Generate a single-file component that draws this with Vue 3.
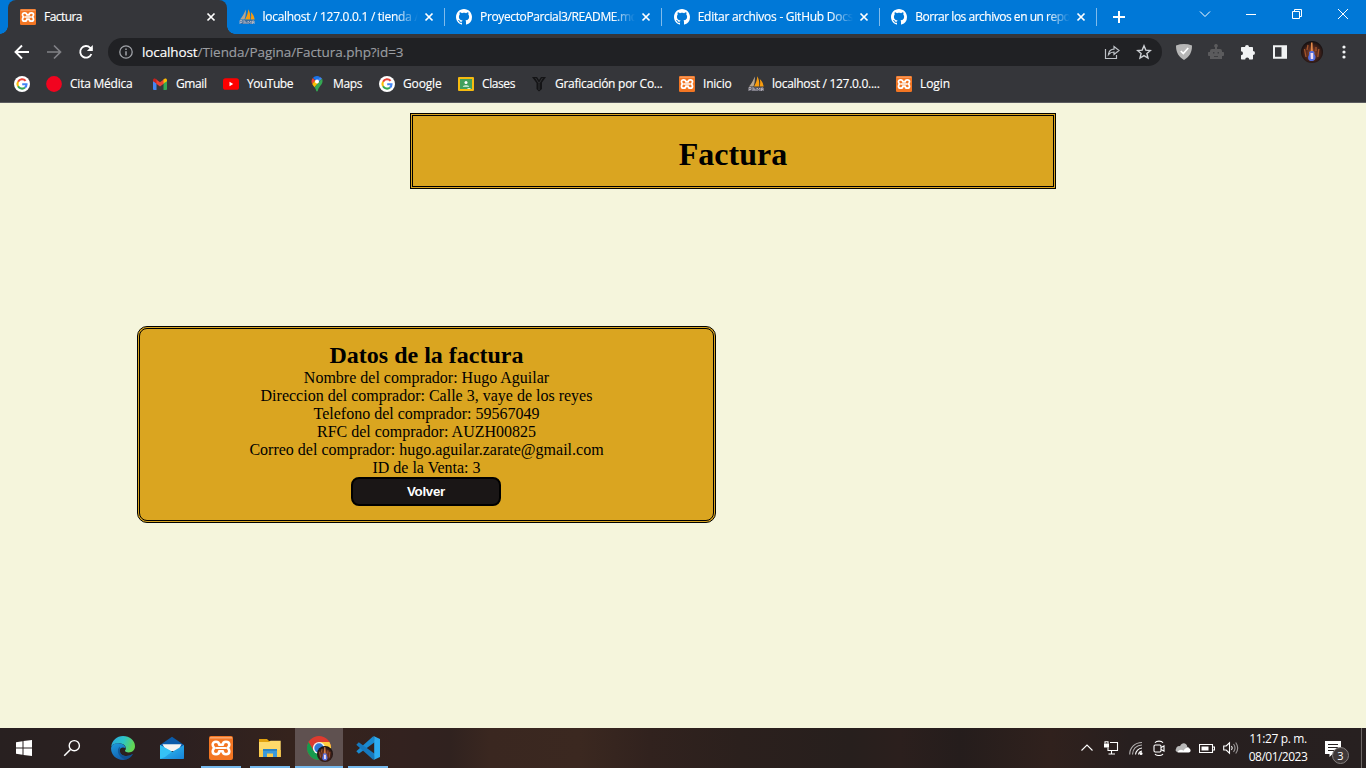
<script setup>
const tabs = [
  { icon: 'pma', title: 'localhost / 127.0.0.1 / tienda /', width: 156 },
  { icon: 'github', title: 'ProyectoParcial3/README.md', width: 157.5 },
  { icon: 'github', title: 'Editar archivos - GitHub Docs', width: 155.5 },
  { icon: 'github', title: 'Borrar los archivos en un repo', width: 155 },
]

const bookmarks = [
  { icon: 'google', title: '', width: 0, slot: 32 },
  { icon: 'dot', title: 'Cita Médica', width: 62.5, slot: 106 },
  { icon: 'gmail', title: 'Gmail', width: 30.5, slot: 71 },
  { icon: 'youtube', title: 'YouTube', width: 46, slot: 86 },
  { icon: 'maps', title: 'Maps', width: 29, slot: 70 },
  { icon: 'google', title: 'Google', width: 38.5, slot: 79 },
  { icon: 'clases', title: 'Clases', width: 33, slot: 73 },
  { icon: 'graf', title: 'Graficación por Co...', width: 107.5, slot: 148 },
  { icon: 'xampp', title: 'Inicio', width: 28.5, slot: 69 },
  { icon: 'pma', title: 'localhost / 127.0.0....', width: 107.5, slot: 148 },
  { icon: 'xampp', title: 'Login', width: 30, slot: 60 },
]

const apps = [
  { icon: 'edge', open: false },
  { icon: 'mail', open: false },
  { icon: 'xampp', open: true },
  { icon: 'folder', open: true },
  { icon: 'chrome', open: true, active: true },
  { icon: 'vscode', open: true },
]

const rows = [
  'Nombre del comprador: Hugo Aguilar',
  'Direccion del comprador: Calle 3, vaye de los reyes',
  'Telefono del comprador: 59567049',
  'RFC del comprador: AUZH00825',
  'Correo del comprador: hugo.aguilar.zarate@gmail.com',
  'ID de la Venta: 3',
]

// Tracks a label so that it spans the given width in pixels.
const vFit = {
  mounted(el, { value }) {
    const count = el.textContent.length
    if (!value || !count) return
    const natural = el.getBoundingClientRect().width
    el.style.letterSpacing = (value - natural) / count + 'px'
  },
}
</script>

<template>
  <div class="screen">
    <svg class="defs" aria-hidden="true">
      <defs>
        <linearGradient id="gEdgeA" x1="0" y1="0" x2="1" y2="0.3">
          <stop offset="0" stop-color="#2aa5e0" /><stop offset=".55" stop-color="#2cc4c8" /><stop offset="1" stop-color="#62d653" />
        </linearGradient>
        <linearGradient id="gEdgeB" x1="0" y1="0" x2="0.6" y2="1">
          <stop offset="0" stop-color="#1e9de0" /><stop offset="1" stop-color="#1159a8" />
        </linearGradient>
        <linearGradient id="gMail" x1="0" y1="0" x2="1" y2="1">
          <stop offset="0" stop-color="#35c4f2" /><stop offset="1" stop-color="#1683d8" />
        </linearGradient>
        <radialGradient id="gPhoto" cx=".5" cy=".55" r=".55">
          <stop offset="0" stop-color="#a3512f" /><stop offset=".45" stop-color="#5b2c20" /><stop offset="1" stop-color="#100e10" />
        </radialGradient>
        <symbol id="i-xampp" viewBox="0 0 24 24">
          <rect width="24" height="24" rx="2" fill="#f37623" />
          <path d="M1 1.800h22" stroke="#f9ab77" stroke-width="1.400" />
          <path d="M10.200 8.800h3.600C13.800 6.500 15 5.800 17 5.800c2.200 0 3.300 1.400 3.300 3 0 1.500-.8 2.500-1.900 3.200 1.100.7 1.900 1.700 1.900 3.200 0 1.600-1.100 3-3.300 3-2 0-3.200-.7-3.200-3h-3.600c0 2.300-1.200 3-3.200 3-2.200 0-3.300-1.400-3.300-3 0-1.500.8-2.500 1.900-3.200-1.100-.7-1.900-1.700-1.900-3.200 0-1.600 1.100-3 3.300-3 2 0 3.200.7 3.200 3z" fill="none" stroke="#fff" stroke-width="2.600" stroke-linejoin="round" />
          <path d="M7.500 12h9" stroke="#fff" stroke-width="2.200" stroke-linecap="round" />
        </symbol>
        <symbol id="i-pma" viewBox="0 0 16 16">
          <path d="M6.800.5C5.500 4 3.500 7.500 1 10.500h4.500C6.800 7 7.100 3.500 6.800.5z" fill="#b6a58f" />
          <path d="M9.300.3C9 4 8 7.500 6 10.500h5.200C11.500 6.500 11 3 9.300.3z" fill="#f89c0e" />
          <path d="M11.800 3c.6 2.500.5 5-.1 7.500h4C15 7 13.800 4.700 11.800 3z" fill="#f89c0e" />
          <path d="M.3 11h15.200l-1.500 4H2z" fill="#667" opacity=".6" />
          <path d="M1 15v-3.500h2v2H1M5 15v-4M5 13h2v2M9 15v-3l1.500 1.500L12 12v3M13.500 15v-3h1.600v3M13.500 13.500h1.600" fill="none" stroke="#c2bdc5" stroke-width=".8" />
        </symbol>
        <symbol id="i-github" viewBox="0 0 16 16">
          <path fill="#fff" d="M8 0C3.580 0 0 3.580 0 8c0 3.540 2.290 6.530 5.470 7.590.4.070.55-.17.55-.38 0-.19-.01-.82-.01-1.490-2.010.37-2.530-.49-2.690-.94-.09-.23-.48-.94-.82-1.130-.28-.15-.68-.52-.01-.53.63-.01 1.080.58 1.230.82.72 1.210 1.870.87 2.330.66.07-.52.28-.87.51-1.070-1.780-.2-3.640-.89-3.640-3.950 0-.87.31-1.590.82-2.150-.08-.2-.36-1.020.08-2.120 0 0 .67-.21 2.200.82.64-.18 1.320-.27 2-.27s1.360.09 2 .27c1.530-1.040 2.200-.82 2.200-.82.44 1.100.16 1.920.08 2.120.51.56.82 1.270.82 2.150 0 3.070-1.870 3.750-3.650 3.950.29.25.54.73.54 1.480 0 1.070-.01 1.930-.01 2.200 0 .21.15.46.55.38A8.010 8.010 0 0 0 16 8c0-4.420-3.580-8-8-8z" />
        </symbol>
        <symbol id="i-google" viewBox="0 0 16 16">
          <circle cx="8" cy="8" r="8" fill="#fff" />
          <g fill="none" stroke-width="2.100">
            <path d="M11.600 4.900A4.600 4.600 0 0 0 4.050 5.700" stroke="#ea4335" />
            <path d="M4.050 5.700a4.700 4.700 0 0 0 0 4.600" stroke="#fbbc05" />
            <path d="M4.050 10.300a4.600 4.600 0 0 0 6.950 1.250" stroke="#34a853" />
            <path d="M11 11.550A4.500 4.500 0 0 0 12.500 8.200H8.200" stroke="#4285f4" />
          </g>
        </symbol>
        <symbol id="i-dot" viewBox="0 0 16 16"><circle cx="8" cy="8" r="7.900" fill="#f1041f" /></symbol>
        <symbol id="i-gmail" viewBox="0 0 16 16">
          <path d="M1 4.500l3.500 2.600V14H2a1 1 0 0 1-1-1z" fill="#4285f4" />
          <path d="M15 4.500l-3.500 2.600V14H14a1 1 0 0 0 1-1z" fill="#34a853" />
          <path d="M4 3.200L8 6.200l4-3v4.300L8 10.500 4 7.500z" fill="#ea4335" />
          <path d="M1 4.200C1 2.600 2.700 2.200 3.700 3l.8.600v4L1 5.200z" fill="#c5221f" />
          <path d="M15 4.200c0-1.600-1.700-2-2.700-1.200l-.8.600v4L15 5.200z" fill="#fbbc04" />
        </symbol>
        <symbol id="i-youtube" viewBox="0 0 16 16">
          <rect y="2.200" width="16" height="11.600" rx="2.600" fill="#f00" /><path d="M6.500 5.800v4.400L10.200 8z" fill="#fff" />
        </symbol>
        <symbol id="i-maps" viewBox="0 0 16 16">
          <path d="M8 0a5.500 5.500 0 0 0-4.200 2L8 5.500 11 .9A5.500 5.500 0 0 0 8 0z" fill="#1a73e8" />
          <path d="M3.800 2A5.500 5.500 0 0 0 3.200 8l3-3.600z" fill="#ea4335" />
          <path d="M11 .9l-5 6 2 1.300 5-5.600A5.500 5.500 0 0 0 11 .9z" fill="#4285f4" />
          <path d="M3.200 8c.6 1.200 1.600 2.300 2.300 3.300L10 6 6.300 4.200z" fill="#fbbc04" />
          <path d="M13 2.600c1 2 .6 4.400-.6 6-1.700 2.300-3 3.500-3.500 6-.2 1.200-1.600 1.200-1.800 0-.3-1.400-.9-2.300-1.600-3.300z" fill="#34a853" />
          <circle cx="8" cy="5.400" r="2" fill="#fff" />
        </symbol>
        <symbol id="i-clases" viewBox="0 0 16 16">
          <rect y="1" width="16" height="14" rx="1" fill="#f6bb10" /><rect x="2" y="3" width="12" height="10" fill="#42a05c" />
          <circle cx="8" cy="6.500" r="1.500" fill="#fff" /><path d="M4.800 11c0-2.700 6.400-2.700 6.400 0z" fill="#b8dfc4" /><path d="M9.500 12.200h3V13h-3z" fill="#fff" />
        </symbol>
        <symbol id="i-graf" viewBox="0 0 16 16">
          <path d="M1 1h5l2 3 2-3h5l-4 5.500V13l-3 2.500L5.500 13V7z" fill="#141416" /><path d="M4.500 2l3.500 5.500L11.500 2M8 8v6" stroke="#3e3f42" stroke-width=".7" fill="none" />
        </symbol>
        <symbol id="i-edge" viewBox="0 0 24 24">
          <path d="M.2 10.500C1.100 4.200 5.800 0 12 0c6.700 0 12 4.500 12 10.200 0 3.500-2.700 6.200-6.300 6.200-2.500 0-4-.9-3.700-1.800.9-1.200 1.100-1.800.8-3C14 9 12 7.500 8.500 7.300 4.800 7.100 1.800 8 .2 10.500z" fill="url(#gEdgeA)" />
          <path d="M.1 12C.4 8.500 4 7 7.800 7.200c4 .2 6.600 2.300 7 5.200-3-1.800-6-.7-6 2.300 0 4.500 6.200 7.300 13.100 3.400C19.800 21.700 16.200 24 12 24 5.200 24-.4 18.500.1 12z" fill="url(#gEdgeB)" />
          <path d="M8.800 10.500c-5 5 1 12.700 6.500 12.900 2.700-.7 5.200-2.600 6.600-5.300-6.900 3.900-13.100 1.100-13.100-3.400z" fill="#104a85" opacity=".7" />
        </symbol>
        <symbol id="i-mail" viewBox="0 0 24 24">
          <path d="M0 9L12 .8 24 9v4H0z" fill="#0b5ba9" /><path d="M2.500 8.300h19L18 15H6z" fill="#f5f4f2" />
          <path d="M0 9l24 14H1a1 1 0 0 1-1-1z" fill="#28b5ef" /><path d="M24 9L0 23h23a1 1 0 0 0 1-1z" fill="url(#gMail)" /><path d="M0 9l12 6.500L5 21 0 23z" fill="#35c2f5" />
        </symbol>
        <symbol id="i-folder" viewBox="0 0 24 24">
          <path d="M1 3h8l2 2h11v5H1z" fill="#e2a20e" /><path d="M1 6h10l1.500-1.200H22.700V21H1z" fill="#ffda6a" />
          <path d="M1 14h21.700v7H1z" fill="#fbcb4b" /><path d="M5 13h14v8h-4v-3.500H9V21H5z" fill="#3b9adb" /><path d="M5 13h14v2H5z" fill="#2883c5" />
        </symbol>
        <symbol id="i-photo" viewBox="0 0 22 22">
          <circle cx="11" cy="11" r="11" fill="url(#gPhoto)" />
          <path d="M10 1.500l1.500.1.400 10-2.200.2z" fill="#e28a49" />
          <path d="M8 11c1.500-1.500 4.500-1.500 5.500.2-.6 1.300.2 2.500.9 3.800.6 3-1 5-3.700 5-3 0-4-2-3.400-4.500.7-1.500 1.200-3 .7-4.500z" fill="#536fe0" />
          <path d="M9.500 12h2.700v6H9.800z" fill="#f1dcef" />
          <path d="M3.500 8l1.500 8M17.800 8l-1 8M7 4L6 9M15 6v4" stroke="#a3552b" stroke-width="1.300" />
        </symbol>
        <symbol id="i-chrome" viewBox="0 0 26 26">
          <circle cx="12" cy="12" r="12" fill="#dd3b2f" />
          <path d="M1.600 6A12 12 0 0 0 12 24l5.200-9H6.800z" fill="#169b4d" />
          <path d="M22.400 6A12 12 0 0 1 12 24l5.200-9L12 6z" fill="#ffcd40" />
          <circle cx="12" cy="12" r="6.100" fill="#f3f3f3" /><circle cx="12" cy="12" r="4.700" fill="#3278d5" />
          <svg x="10" y="10" width="16" height="16"><use href="#i-photo" /></svg>
        </symbol>
        <symbol id="i-vscode" viewBox="0 0 24 24">
          <path d="M17.500 0L.3 15.300l2.500 2.400L19 6z" fill="#1a8ad0" />
          <path d="M2.800 6.300L.3 8.700 17.500 24 19 18z" fill="#1679be" />
          <path d="M17.500 0L24 3v18l-6.500 3c.5-.5.7-1 .7-1.700V1.700c0-.7-.2-1.200-.7-1.700z" fill="#2cacf1" />
        </symbol>
      </defs>
    </svg>

    <header class="browser">
      <div class="strip">
        <div class="tab current">
          <svg class="ico"><use href="#i-xampp" /></svg>
          <div class="title"><span v-fit="38">Factura</span></div>
          <svg class="close" viewBox="0 0 8 8"><path d="M.5.5l7 7M7.500.5l-7 7" /></svg>
        </div>
        <div v-for="tab in tabs" :key="tab.title" class="tab">
          <svg class="ico"><use :href="'#i-' + tab.icon" /></svg>
          <div class="title fade"><span v-fit="tab.width">{{ tab.title }}</span></div>
          <svg class="close" viewBox="0 0 8 8"><path d="M.5.5l7 7M7.500.5l-7 7" /></svg>
        </div>
        <svg class="plus" viewBox="0 0 12 12"><path d="M6 0v12M0 6h12" stroke="#fff" stroke-width="2" /></svg>
        <div class="window">
          <svg viewBox="0 0 12 12"><path d="M1 3.500l5 5 5-5" /></svg>
          <svg viewBox="0 0 12 12"><path d="M1 6.500h10" /></svg>
          <svg viewBox="0 0 12 12"><path d="M1.500 3.500h7v7h-7zM3.500 3.500v-2h7v7h-2" /></svg>
          <svg viewBox="0 0 12 12"><path d="M1 1l10 10M11 1L1 11" /></svg>
        </div>
      </div>

      <div class="toolbar">
        <div class="nav">
          <svg viewBox="0 0 16 16"><path d="M15 8H2M8 1.500L1.500 8 8 14.500" stroke="#fff" stroke-width="1.900" fill="none" /></svg>
          <svg viewBox="0 0 16 16"><path d="M1 8h13M8 1.500L14.500 8 8 14.500" stroke="#818286" stroke-width="1.700" fill="none" /></svg>
          <svg viewBox="0 0 16 16"><path d="M13.400 10a5.800 5.800 0 1 1-1.200-6.200L14 5.500" stroke="#fff" stroke-width="1.900" fill="none" /><path d="M14.800 1v6H8.900z" fill="#fff" /></svg>
        </div>
        <div class="omnibox">
          <svg class="info" viewBox="0 0 14 14"><circle cx="7" cy="7" r="6.200" fill="none" stroke="#a0a3a8" stroke-width="1.300" /><path d="M7 6.200v4.300M7 3.500V5" stroke="#a0a3a8" stroke-width="1.500" /></svg>
          <div class="url"><b v-fit="55.500">localhost</b><span v-fit="206">/Tienda/Pagina/Factura.php?id=3</span></div>
          <svg class="share" viewBox="0 0 16 16"><path d="M1.500 5v9.500h11V11M4.500 10.500C5 7 7 5.300 10 5.200V2.500L15 6.500l-5 4V8C7.500 8 6 8.800 4.500 10.500z" fill="none" stroke="#bdc1c6" stroke-width="1.200" /></svg>
          <svg class="star" viewBox="0 0 16 16"><path d="M8 1.800l1.800 4.300 4.600.4-3.500 3 1.100 4.500L8 11.600 4 14l1.100-4.500-3.500-3 4.600-.4z" fill="none" stroke="#cdd0d4" stroke-width="1.400" /></svg>
        </div>
        <div class="extensions">
          <svg viewBox="0 0 16 16"><path d="M0 1.500Q8-1.400 16 1.500C16 9 13 13 8 16 3 13 0 9 0 1.500z" fill="#b6b6b6" /><path d="M4.800 7l2.500 2.500L12.200 4" stroke="#fff" stroke-width="1.700" fill="none" /></svg>
          <svg viewBox="0 0 16 16"><path d="M8 0a1.800 1.800 0 0 1 1 3.300V5h3a2 2 0 0 1 2 2v1h1.200c.5 0 .8.300.8.800v2.400c0 .5-.3.800-.8.800H14v3H2v-3H.8c-.5 0-.8-.3-.8-.8V8.800C0 8.300.3 8 .8 8H2V7a2 2 0 0 1 2-2h3V3.300A1.800 1.800 0 0 1 8 0z" fill="#5b5b5d" /><path d="M5 8h1.400v1.500H5zM9.600 8H11v1.500H9.600zM6 12h4v1H6z" fill="#3d3e41" /></svg>
          <svg viewBox="0 0 16 16"><path d="M5 3a2 2 0 0 1 4 0h3c.6 0 1 .4 1 1v3a2 2 0 0 1 0 4v3.500c0 .6-.4 1-1 1H9.200a2 2 0 0 0-4 0H2c-.6 0-1-.4-1-1v-3.300a2 2 0 0 0 0-4V4c0-.6.400-1 1-1z" fill="#f1f3f4" /></svg>
          <svg viewBox="0 0 16 16"><path fill-rule="evenodd" d="M1 1.200h14v13.600H1zM3 3.200v9.600h6.500V3.200z" fill="#f1f3f4" /></svg>
          <svg class="avatar"><use href="#i-photo" /></svg>
          <svg viewBox="0 0 16 16"><g fill="#f1f3f4"><circle cx="8" cy="3" r="1.600" /><circle cx="8" cy="8" r="1.600" /><circle cx="8" cy="13" r="1.600" /></g></svg>
        </div>
      </div>

      <nav class="bookmarks">
        <div v-for="(mark, i) in bookmarks" :key="i" class="mark" :style="{ width: mark.slot + 'px' }">
          <svg class="ico"><use :href="'#i-' + mark.icon" /></svg>
          <span v-if="mark.title" v-fit="mark.width">{{ mark.title }}</span>
        </div>
      </nav>
    </header>

    <main class="page">
      <div class="banner"><h1>Factura</h1></div>
      <section class="card">
        <h2>Datos de la factura</h2>
        <p v-for="row in rows" :key="row">{{ row }}</p>
        <button type="button"><span v-fit="38">Volver</span></button>
      </section>
    </main>

    <footer class="taskbar">
      <div class="slot">
        <svg width="16" height="16" viewBox="0 0 16 16"><path d="M0 2.300l6.500-1v6.200H0zM7.500 1.100L16 0v7.500H7.500zM0 8.500h6.500v6.200l-6.500-1zM7.500 8.500H16V16l-8.500-1.100z" fill="#fff" /></svg>
      </div>
      <div class="slot">
        <svg width="18" height="18" viewBox="0 0 18 18"><circle cx="11.300" cy="6.700" r="5.100" fill="none" stroke="#fff" stroke-width="1.400" /><path d="M7.500 10.500L1.200 16.800" stroke="#fff" stroke-width="1.500" /></svg>
      </div>
      <div class="apps">
        <div v-for="app in apps" :key="app.icon" class="slot" :class="{ open: app.open, active: app.active }">
          <svg :class="app.icon"><use :href="'#i-' + app.icon" /></svg>
        </div>
      </div>
      <div class="tray">
        <svg viewBox="0 0 16 16"><path d="M2.500 10.500L8 5l5.500 5.500" /></svg>
        <svg viewBox="0 0 16 16"><path d="M7 2.500h7.500v8H5v-3M8.500 11v3M5.500 14h6.500" /><path d="M1 3.500h5v4H1z" fill="#fff" stroke="none" /><path d="M2 3.500V1.700h3v1.800" /></svg>
        <svg viewBox="0 0 16 16"><path d="M10.500 14.500a4 4 0 0 1 3.500-3.500M7.500 14.500A7 7 0 0 1 14 8" /><path d="M4.500 14.500C4.500 9 8.500 5 14 5M1.700 14.500C1.700 7.500 7 2.500 14 2.500" opacity=".65" /><circle cx="13" cy="13.500" r="1.500" fill="#fff" stroke="none" /></svg>
        <svg viewBox="0 0 16 16"><rect x="3" y="5" width="7" height="7" rx="1.200" /><path d="M10 7.500l3-1.500v5l-3-1.500M4 2.800C5.500.6 10.500.6 12 2.800M4 14c1.500 2 6.500 2 8 0" /></svg>
        <svg viewBox="0 0 16 16"><path d="M1 9c.3-3 3-3.500 4-2.800C7 1.700 12 3 12.300 7c2.500-.2 4.200 4.500.7 5H3.500C1 12 0 10.500 1 9z" fill="#b9b9b9" stroke="none" /><path d="M2.500 12.500c1-3 4-3.500 6-1.700 1.300-2.800 4-3.500 5.200-2.500 3 1 2 4.200 0 4.200z" fill="#fff" stroke="none" /></svg>
        <svg viewBox="0 0 16 16"><path d="M.5 4.500h13v8H.5zM14 7h1.500v3H14" /><path d="M2.500 6.500h7v4h-7z" fill="#fff" stroke="none" /></svg>
        <svg viewBox="0 0 16 16"><path d="M.7 6h2.500L6.500 2.800v10.400L3.200 10H.7z" /><path d="M8.500 6q1.500 2 0 4" /><path d="M10.500 4q3 4 0 8M12.700 2.500q4 5.500 0 11" opacity=".55" /></svg>
      </div>
      <div class="clock"><span v-fit="57.500">11:27 p. m.</span><span v-fit="58.500">08/01/2023</span></div>
      <div class="notice">
        <svg viewBox="0 0 16 16"><path d="M0 0h16v13h-8.500L4.500 16v-3H0z" fill="#fff" /><path d="M3 3.500h10M3 6.500h10M3 9.500h6" stroke="#272121" stroke-width="1" /></svg>
        <span class="badge">3</span>
      </div>
      <div class="peek"></div>
    </footer>
  </div>
</template>

<style>
html, body { margin: 0; overflow: hidden; }
</style>

<style scoped>
.screen { width: 1366px; height: 768px; display: flex; flex-direction: column; overflow: hidden; background: #f5f5dc; font-family: "Open Sans", "Noto Sans", sans-serif; }
.defs { position: absolute; width: 0; height: 0; }
.ico { width: 16px; height: 16px; flex: none; }
.browser { height: 103px; flex: none; box-sizing: border-box; background: #35363a; border-bottom: 1px solid #5b5c5f; color: #fff; font-size: 12px; white-space: nowrap; -webkit-text-stroke: 0.15px currentColor; }

.strip { height: 34px; padding-left: 8px; background: #0078d7; display: flex; align-items: center; }
.tab { width: 217.600px; height: 18px; box-sizing: border-box; padding: 0 11px 0 11.500px; display: flex; align-items: center; border-right: 1px solid #80bbeb; }
.tab.current { position: relative; width: 219px; height: 34px; padding: 0 12px; background: #35363a; border: 0; border-radius: 8px 8px 0 0; }
.tab.current::before, .tab.current::after { content: ""; position: absolute; bottom: 0; width: 8px; height: 8px; }
.tab.current::before { left: -8px; background: radial-gradient(circle at 0 0, #0078d7 7.500px, #35363a 8px); }
.tab.current::after { right: -8px; background: radial-gradient(circle at 100% 0, #0078d7 7.500px, #35363a 8px); }
.title { flex: none; width: 158px; margin-left: 8px; line-height: 18px; }
.title span { display: inline-block; }
.fade { mask-image: linear-gradient(to right, #000 132px, transparent 155px); }
.close { width: 8px; height: 8px; margin-left: auto; flex: none; overflow: visible; }
.close path { stroke: #fff; stroke-width: 1.700; fill: none; }
.plus { width: 12px; height: 12px; margin-left: 16px; }
.window { margin-left: auto; display: flex; align-items: center; padding: 0 17px 6px 0; gap: 34px; }
.window svg { width: 12px; height: 12px; }
.window path { stroke: #fff; fill: none; stroke-width: 1; }

.toolbar { height: 36px; display: flex; align-items: center; }
.nav { width: 94px; padding-left: 14px; display: flex; gap: 16px; }
.nav svg { width: 16px; height: 16px; }
.omnibox { width: 1054px; height: 28px; box-sizing: border-box; padding: 0 10px 0 11px; border-radius: 14px; background: #202124; display: flex; align-items: center; font-size: 13.500px; }
.info { width: 14px; height: 14px; }
.url { margin: 0 auto 0 9px; display: flex; line-height: 20px; }
.url b { font-weight: 400; }
.url span { color: #9a9da1; }
.share { width: 16px; height: 16px; margin-right: 16px; }
.star { width: 16px; height: 16px; }
.extensions { display: flex; align-items: center; gap: 16px; padding-left: 14px; }
.extensions svg { width: 16px; height: 16px; flex: none; }
.extensions .avatar { width: 22px; height: 22px; margin: 0 -3px; }

.bookmarks { height: 28px; padding-left: 14px; display: flex; align-items: center; }
.mark { display: flex; align-items: center; gap: 8px; flex: none; line-height: 18px; }

.page { flex: 1; font-family: "Liberation Serif", "Times New Roman", serif; font-size: 16px; color: #000; text-align: center; }
.banner { width: 646px; height: 76px; margin: 10px 0 0 410px; box-sizing: border-box; border: 3px double #000; background: #daa520; padding-top: 20px; }
h1, h2, p { margin: 0; }
h1 { font-size: 32px; line-height: 37px; }
.card { width: 579px; height: 197px; margin: 137px 0 0 137px; box-sizing: border-box; padding-top: 13px; border: 3px double #000; border-radius: 10px; background: #daa520; }
h2 { font-size: 24px; line-height: 27px; }
p { line-height: 18px; }
button { display: block; width: 150px; height: 29px; margin: 0 0 0 211px; padding: 0; border: 2px solid #000; border-radius: 8px; background: #1a1616; color: #fff; font: bold 13.333px "Liberation Sans", Arial, sans-serif; }

.taskbar { height: 40px; flex: none; display: flex; color: #fff; background: linear-gradient(to right, #282020 0, #2c2020 180px, #35231d 290px, #33221f 400px, #30221f 450px, #3a2720 490px, #3b2820 580px, #31221e 650px, #2b201d 740px, #271f1d 850px, #2b1f1d 900px, #251d1c 960px, #30211d 1050px, #271f1f 1130px, #272020 1366px); }
.slot { width: 48px; height: 40px; display: flex; align-items: center; justify-content: center; position: relative; }
.apps { margin-left: 3px; display: flex; gap: 1px; }
.apps svg { width: 24px; height: 24px; }
.apps svg.chrome { width: 26px; height: 26px; margin-left: 2px; margin-top: 2px; }
.open::after { content: ""; position: absolute; left: 4px; right: 4px; bottom: 0; height: 2px; background: #76b9ed; }
.active { background: #5f5150; }
.active::after { left: 0; right: 0; }
.tray { margin-left: auto; display: flex; align-items: center; gap: 8px; }
.tray svg { width: 16px; height: 16px; }
.tray svg:nth-child(3) { margin: 0 -1px 0 1px; }
.tray path, .tray rect { stroke: #fff; stroke-width: 1.100; fill: none; }
.tray path[stroke="none"] { stroke: none; fill: #fff; }
.tray path[fill="#b9b9b9"] { fill: #b9b9b9; }
.clock { width: 78px; padding-top: 2px; display: flex; flex-direction: column; align-items: center; font-size: 12px; line-height: 18px; white-space: nowrap; }
.notice { position: relative; width: 44px; padding: 12px 0 0 8px; box-sizing: border-box; }
.notice svg { width: 16px; height: 16px; }
.badge { position: absolute; left: 15px; top: 19px; width: 15px; height: 15px; border: 1px solid #85807f; border-radius: 50%; background: #3f3838; font-size: 11px; line-height: 15px; text-align: center; }
.peek { width: 4px; border-left: 1px solid #6d6765; }
</style>
